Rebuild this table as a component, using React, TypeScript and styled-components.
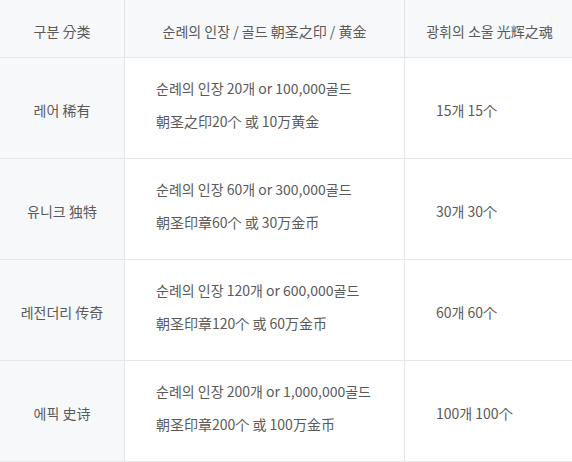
import styled, { createGlobalStyle } from 'styled-components'

const GlobalStyle = createGlobalStyle`
  body {
    margin: 0;
    background: #ffffff;
    font-family: "Noto Sans CJK KR", "Noto Sans", sans-serif;
  }
`

const StyledTable = styled.table`
  width: 572px;
  border-collapse: collapse;
  table-layout: fixed;
  font-size: 14px;
  color: #5a5a5a;
`

const StyledHeadCell = styled.th<{ $width: number }>`
  width: ${(p) => p.$width}px;
  height: 53px;
  padding: 4px 0 0;
  background-color: #f7f8fa;
  font-weight: 400;
  text-align: center;
  border-bottom: 1px solid #e4e6ea;
  border-right: 1px solid #e4e6ea;
  &:last-child {
    border-right: none;
  }
`

const StyledRow = styled.tr`
  height: 101px;
`

const StyledLabelCell = styled.td`
  background-color: #f7f8fa;
  text-align: center;
  padding: 4px 0 0;
  border-bottom: 1px solid #e4e6ea;
  border-right: 1px solid #e4e6ea;
`

const StyledCell = styled.td<{ $shift: number }>`
  padding: 0 32px 0 31px;
  padding-top: ${(p) => Math.max(p.$shift, 0)}px;
  padding-bottom: ${(p) => Math.max(-p.$shift, 0)}px;
  vertical-align: middle;
  border-bottom: 1px solid #e4e6ea;
  border-right: 1px solid #e4e6ea;
  &:last-child {
    border-right: none;
  }
`

const StyledLine = styled.p`
  margin: 0;
  line-height: 22px;
  & + & {
    margin-top: 11px;
  }
`

const rows = [
  {
    name: '레어 稀有',
    cost: ['순례의 인장 20개 or 100,000골드', '朝圣之印20个 或 10万黄金'],
    soul: '15개 15个',
  },
  {
    name: '유니크 独特',
    cost: ['순례의 인장 60개 or 300,000골드', '朝圣印章60个 或 30万金币'],
    soul: '30개 30个',
  },
  {
    name: '레전더리 传奇',
    cost: ['순례의 인장 120개 or 600,000골드', '朝圣印章120个 或 60万金币'],
    soul: '60개 60个',
  },
  {
    name: '에픽 史诗',
    cost: ['순례의 인장 200개 or 1,000,000골드', '朝圣印章200个 或 100万金币'],
    soul: '100개 100个',
  },
]

const App = () => {
  return (
    <>
      <GlobalStyle />
      <StyledTable>
        <thead>
          <tr>
            <StyledHeadCell $width={124}>구분 分类</StyledHeadCell>
            <StyledHeadCell $width={279}>순례의 인장 / 골드 朝圣之印 / 黄金</StyledHeadCell>
            <StyledHeadCell $width={169}>광휘의 소울 光辉之魂</StyledHeadCell>
          </tr>
        </thead>
        <tbody>
          {rows.map((row) => (
            <StyledRow key={row.name}>
              <StyledLabelCell>{row.name}</StyledLabelCell>
              <StyledCell $shift={-8}>
                {row.cost.map((line) => (
                  <StyledLine key={line}>{line}</StyledLine>
                ))}
              </StyledCell>
              <StyledCell $shift={3}>{row.soul}</StyledCell>
            </StyledRow>
          ))}
        </tbody>
      </StyledTable>
    </>
  )
}

export default App
